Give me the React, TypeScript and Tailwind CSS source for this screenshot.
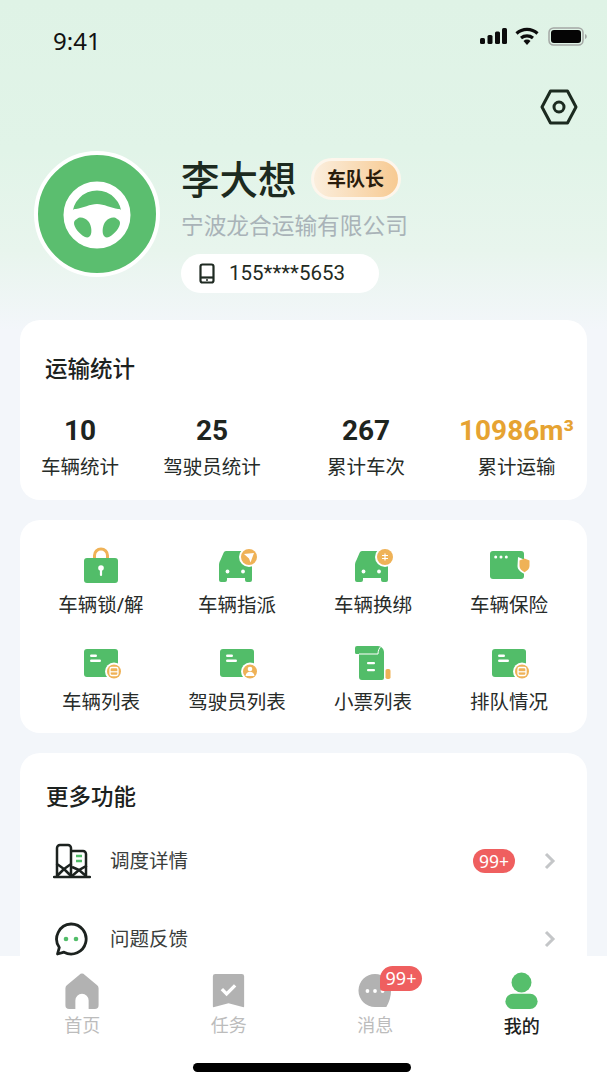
import React from "react";

const CJK = "font-['Noto_Sans','Noto_Sans_CJK_SC',sans-serif]";

function Car({ badge }: { badge: React.ReactNode }) {
  return (
    <svg width="33" height="31" viewBox="0 0 33 31" className="mb-[1px] mr-[4px] overflow-visible">
      <path d="M7 0h19c3 0 7 8 7 13v16a2 2 0 0 1-2 2h-3a2 2 0 0 1-2-2v-2H8v2a2 2 0 0 1-2 2H2a2 2 0 0 1-2-2V14c0-2 .5-3 1.500-5L4.500 2C5 .8 6 0 7 0Z" fill="#52bd69" />
      <circle cx="8.500" cy="20.500" r="1.900" fill="#fff" />
      <circle cx="24" cy="20.500" r="1.900" fill="#fff" />
      <circle cx="30" cy="6" r="10" fill="#fff" />
      <circle cx="30" cy="6" r="8" fill="#efb257" />
      {badge}
    </svg>
  );
}

function CardIcon({ badge }: { badge: React.ReactNode }) {
  return (
    <svg width="34" height="28" viewBox="0 0 34 28" className="mb-[3px] overflow-visible">
      <rect width="34" height="28" rx="3" fill="#52bd69" />
      <rect x="6" y="5.500" width="7" height="2.500" rx="1.200" fill="#fff" />
      <rect x="6" y="10.500" width="11" height="2.500" rx="1.200" fill="#fff" />
      <circle cx="30" cy="22.500" r="9" fill="#fff" />
      <circle cx="30" cy="22.500" r="7" fill="#efb257" />
      {badge}
    </svg>
  );
}

const vehicleBadge = (
  <g>
    <rect x="26" y="18.500" width="8" height="8" rx="1.800" fill="none" stroke="#fff" strokeWidth="1.300" />
    <path d="M26 22.800h8" stroke="#fff" strokeWidth="1.200" />
  </g>
);

const driverBadge = (
  <g fill="#fff">
    <circle cx="30" cy="20" r="2.300" />
    <path d="M25.500 27c.4-3 2.500-4.200 4.500-4.200s4.100 1.200 4.500 4.200Z" />
  </g>
);

const tools: { label: string; icon: React.ReactNode }[] = [
  {
    label: "车辆锁/解",
    icon: (
      <svg width="34" height="36" viewBox="0 0 34 36" className="overflow-visible">
        <path d="M10.500 11V8.500a6.500 6.500 0 0 1 13 0V11" fill="none" stroke="#efb257" strokeWidth="3" />
        <rect y="11" width="34" height="25" rx="3" fill="#52bd69" />
        <circle cx="17" cy="21" r="2.800" fill="#fff" />
        <rect x="15.900" y="21" width="2.200" height="8" rx="1.100" fill="#fff" />
      </svg>
    ),
  },
  {
    label: "车辆指派",
    icon: <Car badge={<path d="M25 3l10-1-3.500 9.500-1.500-4Z" fill="#fff" />} />,
  },
  {
    label: "车辆换绑",
    icon: (
      <Car
        badge={
          <path d="M27 4.500h6M27 7.500h6M30 2.500v7" stroke="#fff" strokeWidth="1.200" fill="none" />
        }
      />
    ),
  },
  {
    label: "车辆保险",
    icon: (
      <svg width="34" height="28" viewBox="0 0 34 28" className="mb-[4px] mr-[4px] overflow-visible">
        <rect width="34" height="28" rx="3" fill="#52bd69" />
        <circle cx="5.700" cy="6" r="1.500" fill="#fff" />
        <circle cx="11" cy="6" r="1.500" fill="#fff" />
        <circle cx="16.300" cy="6" r="1.500" fill="#fff" />
        <path d="M28 6 34 8.500 41 6v9c0 4-3 6-6.500 8-3.500-2-7-4-7-8Z" fill="#fff" />
        <path d="M29.500 9.500l5-2 5 2v5.500c0 3-2.500 4.800-5 6.300-2.500-1.500-5-3.300-5-6.300Z" fill="#efb257" />
      </svg>
    ),
  },
  { label: "车辆列表", icon: <CardIcon badge={vehicleBadge} /> },
  { label: "驾驶员列表", icon: <CardIcon badge={driverBadge} /> },
  {
    label: "小票列表",
    icon: (
      <svg width="36" height="34" viewBox="0 0 36 34">
        <path d="M0 2a2 2 0 0 1 2-2h21c3 0 6 3 6 6v26a2 2 0 0 1-2 2H7a3 3 0 0 1-3-3V8H1.500A1.500 1.500 0 0 1 0 6.500Z" fill="#52bd69" />
        <path d="M4 8h19c0-3 1-6 3-7.500" fill="none" stroke="#fff" strokeWidth="1" />
        <rect x="12" y="16" width="8" height="2.200" rx="1" fill="#fff" />
        <rect x="12" y="23" width="8" height="2.200" rx="1" fill="#fff" />
        <rect x="30.500" y="23" width="5" height="10" rx="1.800" fill="#efb257" />
      </svg>
    ),
  },
  { label: "排队情况", icon: <CardIcon badge={vehicleBadge} /> },
];

const stats = [
  { value: "10", label: "车辆统计", tone: "text-[#1e241f]" },
  { value: "25", label: "驾驶员统计", tone: "text-[#1e241f]" },
  { value: "267", label: "累计车次", tone: "text-[#1e241f]" },
  { value: "10986m³", label: "累计运输", tone: "text-[#e6a332]" },
];

function Chevron() {
  return (
    <svg width="12" height="18" viewBox="0 0 12 18" fill="none">
      <path d="M2 2l7 7-7 7" stroke="#c4c6c8" strokeWidth="3" />
    </svg>
  );
}

export default function App() {
  return (
    <div className={`flex h-[1080px] w-[607px] flex-col overflow-hidden bg-[#f4f6fb] ${CJK}`}>
      <div className="flex min-h-0 flex-1 flex-col overflow-hidden bg-[linear-gradient(180deg,#dff3e6_0px,#e1f4e8_150px,#e8f5ed_250px,#f3f6fa_330px)]">
        {/* status bar */}
        <div className="flex h-[80px] shrink-0 justify-between pl-[53px] pr-[20px] pt-[26px]">
          <span className="text-[24px] leading-[30px] text-[#111]">9:41</span>
          <div className="mt-[1px] flex h-[18px] items-center gap-[8px]">
            <svg width="27" height="16" viewBox="0 0 27 16" fill="#0c0c0c">
              <rect x="0" y="10" width="5" height="6" rx="1.500" />
              <rect x="7.500" y="7" width="5" height="9" rx="1.500" />
              <rect x="15" y="3.500" width="5" height="12.500" rx="1.500" />
              <rect x="22" y="0" width="5" height="16" rx="1.500" />
            </svg>
            <svg width="24" height="18" viewBox="0 0 24 18" fill="none" stroke="#0c0c0c" strokeWidth="3.200">
              <path d="M1.500 6.500c6-5.500 15-5.500 21 0" />
              <path d="M6 11c3.500-2.800 8.500-2.800 12 0" />
              <path d="M8.500 14 12 18l3.500-4a5 5 0 0 0-7 0Z" fill="#0c0c0c" stroke="none" />
            </svg>
            <svg width="39" height="19" viewBox="0 0 39 19" className="ml-[1px]">
              <rect x="1" y="1" width="34" height="17" rx="4.500" fill="none" stroke="#a4a8a5" strokeWidth="1.500" />
              <rect x="3" y="3" width="30" height="13" rx="3" fill="#050505" />
              <path d="M37 7c1.300.5 1.800 1.400 1.800 2.500s-.5 2-1.800 2.500Z" fill="#a4a8a5" />
            </svg>
          </div>
        </div>

        {/* settings */}
        <div className="flex h-[70px] shrink-0 justify-end pr-[29px] pt-[9px]">
          <svg width="38" height="36" viewBox="0 0 38 36" fill="none" stroke="#1c2a20" strokeWidth="3" strokeLinejoin="round">
            <path d="M10.500 2h17L36 18l-8.500 16h-17L2 18Z" />
            <circle cx="19" cy="18" r="5" />
          </svg>
        </div>

        {/* profile */}
        <div className="flex h-[170px] shrink-0 pl-[34px]">
          <div className="mt-[1px] flex h-[126px] w-[126px] shrink-0 items-center justify-center rounded-full border-[4px] border-white bg-[#5bbe6f]">
            <svg width="68" height="68" viewBox="0 0 68 68" className="mt-[1px]">
              <circle cx="34" cy="34" r="29" fill="none" stroke="#fff" strokeWidth="9" />
              <path d="M8 33c0-3 2-5 5-5 7-1 14-5 21-5s14 4 21 5c3 0 5 2 5 5v10l-3 10-8 9-8 3H24l-8-3-8-9Z" fill="#fff" />
              <path d="M14 38c3-3 8-1 11 2 3 3 4 9 3 13-1 3-3 4-6 3-6-3-11-10-11-14 0-2 1-3 3-4Z" fill="#5bbe6f" />
              <path d="M54 38c-3-3-8-1-11 2-3 3-4 9-3 13 1 3 3 4 6 3 6-3 11-10 11-14 0-2-1-3-3-4Z" fill="#5bbe6f" />
            </svg>
          </div>
          <div className="ml-[21px] flex flex-col">
            <div className="flex h-[58px] items-center">
              <span className="text-[38.500px] font-medium leading-[50px] text-[#1c2a20]">李大想</span>
              <span className="ml-[14px] flex h-[42px] w-[90px] items-center justify-center rounded-full border-[3px] border-[#fdf6ec] bg-[linear-gradient(90deg,#fbeedd,#f7ca92)] text-[19px] font-bold text-[#2a1c0c]">
                车队长
              </span>
            </div>
            <span className="mt-[2px] text-[22.700px] leading-[32px] text-[#a9b3b8]">宁波龙合运输有限公司</span>
            <div className="mt-[12px] flex h-[39px] w-[198px] items-center rounded-full bg-white pl-[18px]">
              <svg width="16" height="21" viewBox="0 0 16 21" fill="none" stroke="#1f2a22" strokeWidth="2.200">
                <rect x="1.500" y="1.500" width="13" height="18" rx="2" />
                <path d="M1.500 14.500h13" />
                <circle cx="8" cy="17" r="1" fill="#1f2a22" stroke="none" />
              </svg>
              <span className="ml-[14px] font-['Roboto',sans-serif] text-[20.500px] text-[#1f2a22]">155****5653</span>
            </div>
          </div>
        </div>

        <div className="flex flex-col gap-[20px] px-[20px]">
          {/* transport stats */}
          <section className="h-[180px] shrink-0 rounded-[20px] bg-white">
            <h2 className="pl-[25px] pt-[32px] text-[22.500px] font-medium leading-[34px] text-[#1c2220]">运输统计</h2>
            <div className="mt-[26px] grid grid-cols-[120px_144px_164px_137px] text-center">
              {stats.map((s) => (
                <div key={s.label} className="flex flex-col items-center">
                  <span className={`whitespace-nowrap font-['Roboto',sans-serif] text-[28px] font-bold leading-[38px] ${s.tone}`}>{s.value}</span>
                  <span className="mt-[2px] text-[19.500px] leading-[30px] text-[#262b28]">{s.label}</span>
                </div>
              ))}
            </div>
          </section>

          {/* quick tools */}
          <section className="grid h-[213px] shrink-0 grid-cols-[repeat(4,136px)] content-start rounded-[20px] bg-white pl-[13px] pt-[25px]">
            {tools.map((t) => (
              <div key={t.label} className="flex h-[97px] flex-col items-center">
                <div className="flex h-[38px] items-end">{t.icon}</div>
                <span className="mt-[7px] text-[19.500px] leading-[30px] text-[#272b29]">{t.label}</span>
              </div>
            ))}
          </section>

          {/* more */}
          <section className="h-[260px] shrink-0 rounded-[20px] bg-white">
            <h2 className="pl-[26px] pt-[27px] text-[22.500px] font-medium leading-[34px] text-[#1c2220]">更多功能</h2>
            <div className="mt-[27px] flex h-[40px] items-center pl-[33px] pr-[31px]">
              <svg width="38" height="36" viewBox="0 0 38 36" fill="none" stroke="#1c221f" strokeWidth="2.500">
                <path d="M4 21V5a3 3 0 0 1 3-3h8a3 3 0 0 1 3 3v16l-7 5Z" strokeLinejoin="round" />
                <path d="M4 21v12M18 21v12M11 26l-7 7M11 26l7 7" />
                <path d="M19 8h11a3 3 0 0 1 3 3v12l-7 4-7-3" />
                <path d="M33 23v10M26 27l-7 6M26 27l7 6" />
                <path d="M23 13h6M23 18h6" stroke="#52bd69" />
                <path d="M1 34h36" strokeLinecap="round" />
              </svg>
              <span className="ml-[19px] flex-1 text-[19.500px] text-[#3a3e3c]">调度详情</span>
              <span className="flex h-[24px] w-[42px] items-center justify-center rounded-full bg-[#ef5f5f] text-[17.500px] text-white">99+</span>
              <span className="ml-[29px] flex"><Chevron /></span>
            </div>
            <div className="mt-[38px] flex h-[40px] items-center pl-[34px] pr-[31px]">
              <svg width="34" height="34" viewBox="0 0 34 34" fill="none" stroke="#1c221f" strokeWidth="2.800">
                <path d="M17 2a15 15 0 1 1-7 28.200L3.500 32l1.800-6.500A15 15 0 0 1 17 2Z" strokeLinejoin="round" />
                <circle cx="12" cy="17" r="2.300" fill="#52bd69" stroke="none" />
                <circle cx="22" cy="17" r="2.300" fill="#52bd69" stroke="none" />
              </svg>
              <span className="ml-[22px] flex-1 text-[19.500px] text-[#3a3e3c]">问题反馈</span>
              <span className="flex"><Chevron /></span>
            </div>
          </section>
        </div>
      </div>

      {/* tab bar */}
      <nav className="relative flex h-[124px] shrink-0 flex-col bg-white">
        <div className="grid grid-cols-[repeat(4,146.500px)] pl-[9px]">
          <div className="flex flex-col items-center pt-[17px]">
            <svg width="36" height="36" viewBox="0 0 36 38" fill="#b2b2b2">
              <path fillRule="evenodd" d="M15 2 2 13a4 4 0 0 0-1.500 3v18a4 4 0 0 0 4 4H11V29a7 7 0 0 1 14 0v9h6.500a4 4 0 0 0 4-4V16a4 4 0 0 0-1.500-3L21 2a4.500 4.500 0 0 0-6 0Z" />
            </svg>
            <span className="mt-[3px] text-[18px] leading-[27px] text-[#bcbcbc]">首页</span>
          </div>
          <div className="flex flex-col items-center pt-[17px]">
            <svg width="33" height="36" viewBox="0 0 34 38">
              <path d="M3 1h28a2.500 2.500 0 0 1 2.500 2.500V35a1 1 0 0 1-1.500 1l-15-4-15 4a1 1 0 0 1-1.500-1V3.500A2.500 2.500 0 0 1 3 1Z" fill="#b2b2b2" />
              <path d="M10 17l5 5 9-9" fill="none" stroke="#fff" strokeWidth="3.500" />
            </svg>
            <span className="mt-[3px] text-[18px] leading-[27px] text-[#bcbcbc]">任务</span>
          </div>
          <div className="relative flex flex-col items-center pt-[17px]">
            <svg width="34" height="36" viewBox="0 0 36 38" fill="#b2b2b2">
              <path d="M18 1a17 17 0 0 1 17 17c0 7-2 13-5 18H18A17.500 17.500 0 0 1 18 1Z" />
              <circle cx="10" cy="19" r="2" fill="#fff" />
              <circle cx="18" cy="19" r="2" fill="#fff" />
              <circle cx="26" cy="19" r="2" fill="#fff" />
            </svg>
            <span className="mt-[3px] text-[18px] leading-[27px] text-[#bcbcbc]">消息</span>
            <span className="absolute left-[78px] top-[10px] flex h-[25px] w-[42px] items-center justify-center rounded-[13px] rounded-bl-[4px] bg-[#ef5f5f] text-[18px] text-white">99+</span>
          </div>
          <div className="flex flex-col items-center pt-[16px]">
            <svg width="35" height="37" viewBox="0 0 36 39" fill="#56bf6c">
              <circle cx="18" cy="11" r="10.500" />
              <rect x="1" y="23" width="34" height="16" rx="8" />
            </svg>
            <span className="mt-[4px] text-[18px] font-medium leading-[27px] text-[#1c2220]">我的</span>
          </div>
        </div>
        <div className="ml-[193px] mt-[23px] h-[9px] w-[218px] rounded-full bg-black" />
      </nav>
    </div>
  );
}
